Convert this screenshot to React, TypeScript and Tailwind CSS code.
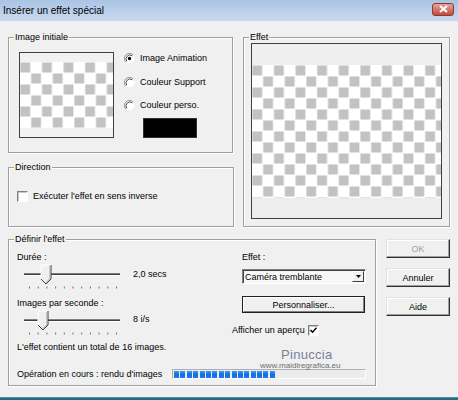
import React from "react";

// Classic Windows dialog: "Insérer un effet spécial"

const Group: React.FC<{ label: string; className?: string; children?: React.ReactNode }> = ({ label, className, children }) => (
  <div className={`relative border border-[#a0a0a0] shadow-[inset_1px_1px_0_#fff,1px_1px_0_#fff] ${className || ""}`}>
    <span className="absolute left-[5px] top-[-7px] bg-[#f0f0f0] px-[1px] leading-[12px]">{label}</span>
    {children}
  </div>
);

const Checker: React.FC<{ id: string; w: number; h: number }> = ({ id, w, h }) => (
  <svg width={w} height={h} className="block">
    <defs>
      <pattern id={id} width="21.6" height="22" patternUnits="userSpaceOnUse">
        <rect x="0.4" y="0.5" width="9.8" height="10" fill="#c2c2c2" />
        <rect x="11.2" y="11.5" width="9.8" height="10" fill="#c2c2c2" />
      </pattern>
    </defs>
    <rect width="100%" height="100%" fill="#fff" />
    <rect width="100%" height="100%" fill={`url(#${id})`} />
  </svg>
);

const Radio: React.FC<{ on?: boolean }> = ({ on }) => (
  <svg width="11" height="11" viewBox="0 0 12 12" className="block shrink-0">
    <circle cx="6" cy="6" r="5.5" fill="#fff" />
    <path d="M2.1 9.9 A5.5 5.5 0 0 1 9.9 2.1" stroke="#808080" strokeWidth="1" fill="none" />
    <path d="M3 9 A4.3 4.3 0 0 1 9 3" stroke="#404040" strokeWidth="1" fill="none" />
    {on && <circle cx="6" cy="6" r="1.8" fill="#000" />}
  </svg>
);

const Check: React.FC<{ on?: boolean }> = ({ on }) => (
  <div className="w-[11px] h-[11px] shrink-0 bg-white border border-t-[#808080] border-l-[#808080] border-r-[#fff] border-b-[#fff] shadow-[inset_1px_1px_0_#c8c8c8]">
    {on && (
      <svg width="9" height="9" viewBox="0 0 9 9" className="block">
        <path d="M1.5 4 L3.5 6.2 L7.5 1.8" stroke="#000" strokeWidth="1.4" fill="none" />
      </svg>
    )}
  </div>
);

const Slider: React.FC<{ thumb: number }> = ({ thumb }) => {
  const ticks = Array.from({ length: 11 }, (_, i) => 7 + i * 8.7);
  const t = thumb;
  return (
    <svg width="100" height="26" className="block shrink-0">
      <line x1="2" y1="10.5" x2="98" y2="10.5" stroke="#808080" />
      <line x1="2" y1="11.5" x2="98" y2="11.5" stroke="#404040" />
      <line x1="2" y1="12.5" x2="98" y2="12.5" stroke="#fff" />
      <polygon points={`${t},2 ${t + 10},2 ${t + 10},16 ${t + 5},21 ${t},16`} fill="#f0f0f0" />
      <polyline points={`${t},16 ${t},2 ${t + 10},2`} stroke="#fff" fill="none" />
      <polyline points={`${t + 10},2 ${t + 10},16 ${t + 5},21 ${t},16`} stroke="#404040" fill="none" />
      <polyline points={`${t + 9},3 ${t + 9},15.5 ${t + 5},19.5`} stroke="#a0a0a0" fill="none" />
      {ticks.map((x, i) => (
        <rect key={i} x={x} y="23.5" width="1" height="2" fill="#707070" />
      ))}
    </svg>
  );
};

const Btn: React.FC<{ label: string; disabled?: boolean }> = ({ label, disabled }) => (
  <div
    className={`w-[64px] h-[19px] flex items-center justify-center bg-[#f0f0f0] border border-t-[#e3e3e3] border-l-[#e3e3e3] border-r-[#303030] border-b-[#303030] shadow-[inset_-1px_-1px_0_#a0a0a0,inset_1px_1px_0_#fff] ${
      disabled ? "text-[#a0a0a0]" : "text-black"
    }`}
  >
    {label}
  </div>
);

export default function App() {
  const segments = Array.from({ length: 16 });
  return (
    <div className="w-[458px] h-[400px] overflow-hidden bg-[#f0f0f0] text-black text-[9px] leading-[12px] font-['Liberation_Sans',Arial,sans-serif]">
      {/* Title bar */}
      <div className="h-[21px] flex items-center justify-between bg-linear-to-b from-[#aac4e4] to-[#c9daef]">
        <span className="pl-[3px] text-[10px]">Insérer un effet spécial</span>
        <div className="mr-[4px] mb-[3px] w-[22px] h-[13px] rounded-[3px] border border-[#8a3b33] bg-linear-to-b from-[#e6a49a] to-[#c2473b] flex items-center justify-center">
          <svg width="9" height="8" viewBox="0 0 9 8">
            <path d="M1 1 L8 7 M8 1 L1 7" stroke="#fff" strokeWidth="2" />
          </svg>
        </div>
      </div>

      <div className="px-[8px] pt-[16px]">
        {/* Top row */}
        <div className="flex">
          <div className="w-[226px] flex flex-col">
            <Group label="Image initiale" className="w-[225px] h-[116px]">
              <div className="flex pl-[10px] pt-[13px]">
                <div className="mt-[1px] w-[95px] h-[86px] border border-[#404040] bg-[#f2f2f2] flex flex-col">
                  <div className="h-[9px]" />
                  <Checker id="ck1" w={93} h={66} />
                  <div className="h-[9px]" />
                </div>
                <div className="ml-[10px] flex flex-col">
                  <div className="h-[14px] flex items-center gap-[5px]">
                    <Radio on />
                    <span>Image Animation</span>
                  </div>
                  <div className="mt-[10px] h-[14px] flex items-center gap-[5px]">
                    <Radio />
                    <span>Couleur Support</span>
                  </div>
                  <div className="mt-[9px] h-[14px] flex items-center gap-[5px]">
                    <Radio />
                    <span>Couleur perso.</span>
                  </div>
                  <div className="mt-[6px] ml-[19px] w-[54px] h-[20px] bg-black border border-[#303030]" />
                </div>
              </div>
            </Group>

            <Group label="Direction" className="mt-[14px] w-[226px] h-[60px]">
              <div className="pl-[8px] pt-[22px] flex items-center gap-[5px]">
                <Check />
                <span>Exécuter l'effet en sens inverse</span>
              </div>
            </Group>
          </div>

          <Group label="Effet" className="ml-[9px] w-[208px] h-[190px]">
            <div className="pl-[7px] pt-[5px]">
              <div className="w-[191px] h-[176px] border border-[#404040] bg-[#efefef] flex flex-col">
                <div className="h-[21px]" />
                <Checker id="ck2" w={189} h={133} />
                <div className="h-[20px] bg-[#ededed]" />
              </div>
            </div>
          </Group>
        </div>

        {/* Bottom row */}
        <div className="flex mt-[12px]">
          <Group label="Définir l'effet" className="w-[369px] h-[147px]">
            <div className="flex">
              <div className="w-[223px] flex flex-col">
                <div className="pl-[8px] pt-[11px] h-[23px]">Durée :</div>
                <div className="flex items-start">
                  <div className="ml-[13px]">
                    <Slider thumb={19} />
                  </div>
                  <span className="ml-[11px] mt-[5px]">2,0 secs</span>
                </div>
                <div className="pl-[8px] mt-[8px] h-[12px]">Images par seconde :</div>
                <div className="flex items-start">
                  <div className="ml-[13px]">
                    <Slider thumb={16} />
                  </div>
                  <span className="ml-[11px] mt-[4px]">8 i/s</span>
                </div>
              </div>
              <div className="flex flex-col">
                <div className="pl-[10px] pt-[11px] h-[23px]">Effet :</div>
                <div className="ml-[10px] mt-[6px] w-[124px] h-[15px] flex items-center bg-[#f7f7f7] border border-t-[#808080] border-l-[#808080] border-r-[#fff] border-b-[#fff] shadow-[inset_1px_1px_0_#404040]">
                  <span className="flex-1 pl-[2px]">Caméra tremblante</span>
                  <div className="mr-[1px] w-[12px] h-[11px] flex items-center justify-center bg-[#f0f0f0] border border-t-[#fff] border-l-[#fff] border-r-[#404040] border-b-[#404040]">
                    <svg width="5" height="3" viewBox="0 0 5 3">
                      <path d="M0 0 H5 L2.5 3 Z" fill="#000" />
                    </svg>
                  </div>
                </div>
                <div className="ml-[10px] mt-[12px] w-[123px] h-[17px] border border-[#202020] flex">
                  <div className="flex-1 flex items-center justify-center border border-t-[#fff] border-l-[#fff] border-r-[#808080] border-b-[#808080]">
                    Personnaliser...
                  </div>
                </div>
                <div className="mt-[11px] h-[12px] flex items-center gap-[3px]">
                  <span>Afficher un aperçu</span>
                  <Check on />
                </div>
              </div>
            </div>
            <div className="pl-[8px] mt-[5px] h-[12px]">L'effet contient un total de 16 images.</div>
            <div className="mt-[15px] flex items-center">
              <span className="pl-[8px] w-[163px]">Opération en cours : rendu d'images</span>
              <div className="w-[194px] h-[10px] bg-[#ececec] border border-t-[#b0b0b0] border-l-[#c8a57a] border-r-[#fff] border-b-[#fff] flex items-center gap-[1.4px] pl-[1px]">
                {segments.map((_, i) => (
                  <div key={i} className="w-[5px] h-[7px] bg-linear-to-b from-[#3d97f5] via-[#0f6fe3] to-[#1b7cee]" />
                ))}
              </div>
            </div>
            {/* watermark */}
            <span className="absolute left-[272px] top-[108px] text-[13px] leading-[13px] text-[#7a7e9e] tracking-[0.3px]">Pinuccia</span>
            <span className="absolute left-[251px] top-[122px] text-[8px] leading-[8px] text-[#6e6e6e]">www.maidiregrafica.eu</span>
          </Group>

          <div className="ml-[10px] flex flex-col gap-[10px]">
            <Btn label="OK" disabled />
            <Btn label="Annuler" />
            <Btn label="Aide" />
          </div>
        </div>
      </div>

      {/* taskbar edge */}
      <div className="mt-[11px] h-[3px] bg-[#2a6a80] border-t border-[#4d8fa5]" />
    </div>
  );
}
